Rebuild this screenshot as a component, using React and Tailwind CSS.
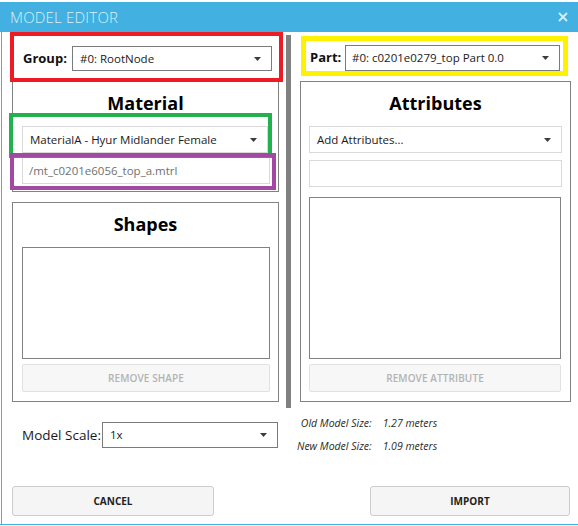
import React from "react";

function Arrow() {
  return (
    <svg width="7" height="4" viewBox="0 0 7 4" className="shrink-0">
      <path d="M0 0 L7 0 L3.5 4 Z" fill="#3c3c3c" />
    </svg>
  );
}

function Select({ text, className, dark }) {
  return (
    <div
      className={
        "flex items-center justify-between bg-white border pr-[10px] " +
        (dark ? "border-[#7a7a7a] " : "border-[#d9d9d9] ") +
        className
      }
    >
      <span className="text-[11.5px] text-[#1a1a1a] whitespace-nowrap">{text}</span>
      <Arrow />
    </div>
  );
}

function DisabledButton({ text, className }) {
  return (
    <div
      className={
        "flex items-center justify-center bg-[#f7f7f7] border border-[#e1e1e1] rounded-[2px] " +
        className
      }
    >
      <span className="text-[10px] font-semibold text-[#b3b3b3] tracking-[0.1px]">{text}</span>
    </div>
  );
}

export default function App() {
  return (
    <div className="w-[578px] h-[526px] bg-white relative overflow-hidden font-['Open_Sans',sans-serif]">
      <div className="mt-[2px] h-[523px] flex flex-col border-b border-[#41b0e0]">
        {/* Title bar */}
        <div className="h-[30px] bg-[#42b0e0] flex items-center justify-between pl-[10px] pr-[10px] shrink-0">
          <span className="text-[15px] font-light text-[#dcf0fa] tracking-[0.2px]">MODEL EDITOR</span>
          <svg width="10" height="10" viewBox="0 0 10 10">
            <path d="M1 1 L9 9 M9 1 L1 9" stroke="#d6eefa" strokeWidth="1.8" />
          </svg>
        </div>

        {/* Body */}
        <div className="flex-1 ml-px border-l border-[#41b0e0] flex flex-col min-h-0">
          <div className="flex pl-[10px]">
            {/* Left column */}
            <div className="w-[267px] flex flex-col">
              <div className="pt-[14px] flex items-center">
                <div className="w-[60px] pl-[11px] text-[13px] font-bold text-[#111]">Group:</div>
                <Select text="#0: RootNode" dark className="w-[200px] h-[25px] pl-[7px]" />
              </div>

              <div className="mt-[10px] h-[111px] border border-[#828282] flex flex-col">
                <div className="pt-[9px] text-center text-[18px] leading-[24px] font-bold text-black">Material</div>
                <Select
                  text="MaterialA - Hyur Midlander Female"
                  className="mt-[11px] ml-[9px] w-[246px] h-[27px] pl-[7px]"
                />
                <div className="mt-[4px] ml-[9px] w-[248px] h-[27px] border border-[#d9d9d9] flex items-center pl-[6px]">
                  <span className="text-[11.5px] text-[#6f6f6f]">/mt_c0201e6056_top_a.mtrl</span>
                </div>
              </div>

              <div className="mt-[10px] h-[200px] border border-[#828282] flex flex-col">
                <div className="pt-[9px] text-center text-[18px] leading-[24px] font-bold text-black">Shapes</div>
                <div className="mt-[11px] ml-[9px] w-[248px] h-[112px] border border-[#828282]" />
                <DisabledButton text="REMOVE SHAPE" className="mt-[5px] ml-[9px] w-[248px] h-[28px]" />
              </div>
            </div>

            {/* Divider */}
            <div className="ml-[7px] mt-[3px] w-[5px] h-[373px] bg-[#808080]" />

            {/* Right column */}
            <div className="ml-[9px] w-[271px] flex flex-col">
              <div className="pt-[13px] flex items-center">
                <div className="w-[45px] pl-[10px] text-[13px] font-bold text-[#111]">Part:</div>
                <Select text="#0: c0201e0279_top Part 0.0" dark className="w-[215px] h-[26px] pl-[6px]" />
              </div>

              <div className="mt-[10px] h-[321px] border border-[#828282] flex flex-col">
                <div className="pt-[9px] text-center text-[18px] leading-[24px] font-bold text-black">Attributes</div>
                <Select text="Add Attributes..." className="mt-[11px] ml-[8px] w-[253px] h-[27px] pl-[7px]" />
                <div className="mt-[7px] ml-[8px] w-[253px] h-[27px] border border-[#d9d9d9]" />
                <div className="mt-[10px] ml-[8px] w-[252px] h-[162px] border border-[#828282]" />
                <DisabledButton text="REMOVE ATTRIBUTE" className="mt-[5px] ml-[8px] w-[252px] h-[28px]" />
              </div>
            </div>
          </div>

          {/* Model scale row */}
          <div className="mt-[14px] h-[26px] flex items-center shrink-0">
            <div className="w-[295px] flex items-center pl-[20px]">
              <span className="text-[13.5px] text-[#1a1a1a] w-[80px] whitespace-nowrap">Model Scale:</span>
              <Select text="1x" dark className="w-[176px] h-[26px] pl-[7px]" />
            </div>
            <div className="grid grid-cols-[auto_auto] gap-x-[11px] text-[10.5px] italic text-[#2a2a2a] leading-[23px] whitespace-nowrap">
              <span className="text-right">Old Model Size:</span>
              <span>1.27 meters</span>
              <span className="text-right">New Model Size:</span>
              <span>1.09 meters</span>
            </div>
          </div>

          {/* Buttons */}
          <div className="mt-[38px] flex justify-between pl-[10px] pr-[8px] shrink-0">
            <div className="w-[202px] h-[30px] bg-[#f5f5f5] border border-[#cccccc] rounded-[3px] flex items-center justify-center">
              <span className="text-[10px] font-bold text-[#222]">CANCEL</span>
            </div>
            <div className="w-[200px] h-[30px] bg-[#f5f5f5] border border-[#cccccc] rounded-[3px] flex items-center justify-center">
              <span className="text-[10px] font-bold text-[#222]">IMPORT</span>
            </div>
          </div>
        </div>
      </div>

      {/* Annotation overlays */}
      <div className="absolute left-[10px] top-[32px] w-[273px] h-[50px] border-[4px] border-[#ed1c24] pointer-events-none" />
      <div className="absolute left-[9px] top-[113px] w-[263px] h-[45px] border-[4px] border-[#22b14c] pointer-events-none" />
      <div className="absolute left-[10px] top-[153px] w-[266px] h-[37px] border-[4px] border-[#a349a4] pointer-events-none" />
      <div className="absolute left-[301px] top-[36px] w-[267px] h-[40px] border-[5px] border-[#fff200] pointer-events-none" />
    </div>
  );
}
